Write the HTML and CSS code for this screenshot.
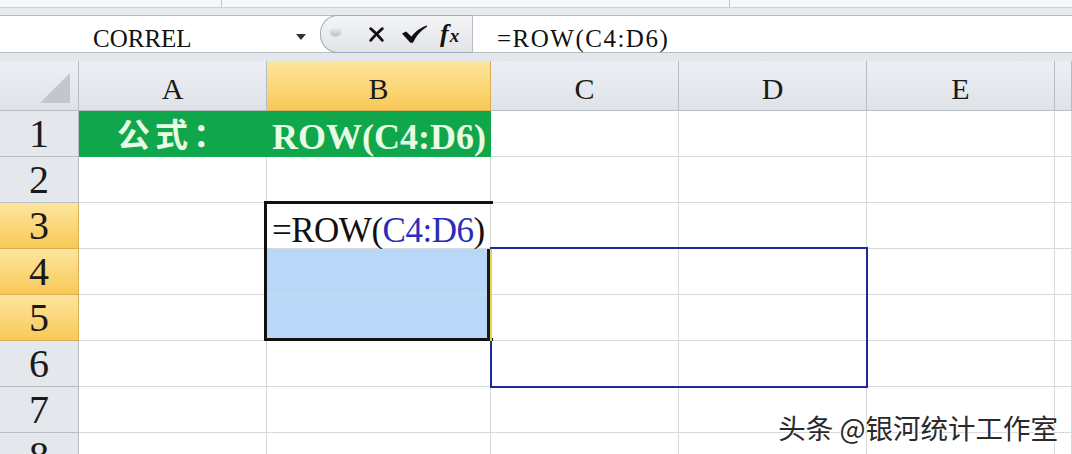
FILE: index.html
```html
<!DOCTYPE html>
<html lang="zh-CN">
<head>
    <meta charset="UTF-8">
    <meta name="viewport" content="width=device-width, initial-scale=1.0">
    <title>ROW(C4:D6)</title>
    <link rel="stylesheet" href="styles.css">
</head>
<body>
    <!-- ribbon edge -->
    <div class="top-edge">
        <span class="seg seg-1"></span>
        <span class="seg seg-2"></span>
    </div>

    <!-- name box + formula bar -->
    <div class="formula-row">
        <div class="name-box">
            <span>CORREL</span>
            <svg class="caret" width="10" height="6" viewBox="0 0 10 6"><path d="M0 0h10L5 6z" fill="#333"/></svg>
        </div>
        <div class="fx-pill">
            <svg class="dot" width="13" height="10" viewBox="0 0 13 10">
                <defs>
                    <linearGradient id="dotg" x1="0" y1="0" x2="0" y2="1">
                        <stop offset="0" stop-color="#eef0f3"/>
                        <stop offset="1" stop-color="#b9bec6"/>
                    </linearGradient>
                </defs>
                <ellipse cx="6.5" cy="5" rx="6" ry="4.5" fill="url(#dotg)"/>
            </svg>
            <svg class="cancel" width="17" height="17" viewBox="0 0 16 16"><path d="M2.5 2.5Q8 7 13.5 13.5M13.5 2.5Q7 8 2.5 13.5" stroke="#111" stroke-width="2.6" stroke-linecap="round" fill="none"/></svg>
            <svg class="enter" width="25" height="19" viewBox="0 0 24 18"><path d="M0 8L4 6L9 11Q15 3 24 0L24 1.5Q15 7 10.5 17L8 17Z" fill="#111"/></svg>
            <span class="fx"><i>f</i><i class="fx-x">x</i></span>
        </div>
        <div class="formula-input">=ROW(C4:D6)</div>
    </div>
    <div class="band"></div>

    <!-- sheet -->
    <div class="sheet">
        <div class="cell corner"><span class="corner-tri"></span></div>
        <div class="cell col-head">A</div>
        <div class="cell col-head on">B</div>
        <div class="cell col-head">C</div>
        <div class="cell col-head">D</div>
        <div class="cell col-head">E</div>
        <div class="cell col-head"></div>

        <div class="cell row-head">1</div>
        <div class="cell green label">公式：</div>
        <div class="cell green value">ROW(C4:D6)</div>
        <div class="cell"></div><div class="cell"></div><div class="cell"></div><div class="cell"></div>

        <div class="cell row-head">2</div>
        <div class="cell"></div><div class="cell"></div><div class="cell"></div><div class="cell"></div><div class="cell"></div><div class="cell"></div>

        <div class="cell row-head on">3</div>
        <div class="cell"></div>
        <div class="cell edit">=ROW(<span class="ref">C4:D6</span>)</div>
        <div class="cell"></div><div class="cell"></div><div class="cell"></div><div class="cell"></div>

        <div class="cell row-head on">4</div>
        <div class="cell"></div>
        <div class="cell sel"></div>
        <div class="cell"></div><div class="cell"></div><div class="cell"></div><div class="cell"></div>

        <div class="cell row-head on">5</div>
        <div class="cell"></div>
        <div class="cell sel"></div>
        <div class="cell"></div><div class="cell"></div><div class="cell"></div><div class="cell"></div>

        <div class="cell row-head">6</div>
        <div class="cell"></div><div class="cell"></div><div class="cell"></div><div class="cell"></div><div class="cell"></div><div class="cell"></div>

        <div class="cell row-head">7</div>
        <div class="cell"></div><div class="cell"></div><div class="cell"></div><div class="cell"></div><div class="cell"></div><div class="cell"></div>

        <div class="cell row-head">8</div>
        <div class="cell"></div><div class="cell"></div><div class="cell"></div><div class="cell"></div><div class="cell"></div><div class="cell"></div>

        <!-- range highlights drawn over the grid -->
        <div class="ref-range"></div>
        <div class="active-range"></div>
        <div class="fill-edge"></div>
    </div>

    <div class="watermark">头条 @银河统计工作室</div>
</body>
</html>
```

FILE: styles.css
```css
html, body {
    margin: 0;
    padding: 0;
}
body {
    width: 1072px;
    height: 454px;
    overflow: hidden;
    position: relative;
    background: #fff;
    font-family: "Liberation Serif", serif;
    color: #111;
}

/* ribbon edge */
.top-edge {
    display: flex;
    height: 15px;
    box-sizing: border-box;
    background: linear-gradient(#f7f8fa 0, #f7f8fa 7px, #cdd1d7 7px, #cdd1d7 8px, #e6e9ed 8px);
}
.seg {
    height: 7px;
    border-right: 1px solid #c3c7cd;
}
.seg-1 { width: 221px; }
.seg-2 { width: 507px; }

/* formula bar */
.formula-row {
    display: flex;
    height: 38px;
    box-sizing: border-box;
    border-top: 1px solid #b7bcc3;
    border-bottom: 1px solid #b7bcc3;
    background: #fff;
}
.name-box {
    width: 320px;
    box-sizing: border-box;
    padding: 0 14px 1px 93px;
    display: flex;
    justify-content: space-between;
    align-items: flex-end;
    font-size: 25px;
    line-height: 1;
}
.name-box .caret {
    margin-bottom: 11px;
}
.fx-pill {
    width: 153px;
    box-sizing: border-box;
    display: flex;
    align-items: center;
    border: 1px solid #a5abb3;
    border-right-color: #b9bec5;
    border-radius: 18px 0 0 18px;
    background: linear-gradient(#f4f5f7, #e1e4e8);
    margin: -1px 0;
}
.fx-pill .dot { margin-left: 8px; margin-top: -4px; }
.fx-pill .cancel { margin-left: 26px; }
.fx-pill .enter { margin-left: 17px; }
.fx {
    margin-left: 13px;
    font-weight: bold;
    font-size: 26px;
    line-height: 1;
    color: #111;
}
.fx-x {
    font-size: 19px;
    margin-left: 1px;
}
.formula-input {
    flex: 1;
    padding: 0 0 1px 24px;
    display: flex;
    align-items: flex-end;
    font-size: 25px;
    letter-spacing: 1.5px;
    line-height: 1;
}
.band {
    height: 8px;
    background: #e4e7eb;
}

/* sheet grid */
.sheet {
    position: relative;
    display: grid;
    grid-template-columns: 79px 188px 224px 188px 188px 188px 17px;
    grid-template-rows: 50px repeat(8, 46px);
}
.cell {
    box-sizing: border-box;
    border-right: 1px solid #d6d8db;
    border-bottom: 1px solid #d6d8db;
    display: flex;
    line-height: 1;
}
.corner, .col-head, .row-head {
    background: linear-gradient(#eceff3, #dfe3e8);
    border-right-color: #b8bcc3;
    border-bottom-color: #b8bcc3;
    color: #1a1a1a;
}
.corner {
    position: relative;
}
.corner-tri {
    position: absolute;
    right: 8px;
    bottom: 7px;
    width: 0;
    height: 0;
    border-left: 30px solid transparent;
    border-bottom: 30px solid #c3c6cb;
}
.col-head {
    justify-content: center;
    align-items: flex-end;
    padding-bottom: 6px;
    font-size: 30px;
}
.row-head {
    background: #e4e7eb;
    justify-content: center;
    align-items: flex-end;
    padding-bottom: 2px;
    font-size: 40px;
}
.col-head.on, .row-head.on {
    background: linear-gradient(#fde59e, #f8c957);
    border-right-color: #d9ad52;
    border-bottom-color: #d9ad52;
}

.green {
    background: #10a64c;
    border-color: #10a64c;
    color: #e8fbe3;
}
.label {
    align-items: center;
    padding-left: 38px;
    font-family: "Noto Sans CJK SC", sans-serif;
    font-weight: bold;
    font-size: 33px;
    letter-spacing: 5px;
}
.value {
    justify-content: flex-end;
    align-items: flex-end;
    padding: 0 4px 1px 0;
    font-weight: bold;
    font-size: 36px;
}
.edit {
    background: #fff;
    align-items: flex-end;
    padding: 0 0 0 5px;
    font-size: 35px;
    letter-spacing: -0.5px;
    white-space: nowrap;
}
.edit .ref {
    color: #2b2db8;
}
.sel {
    background: #b9d8f8;
    border-bottom-color: #c8def5;
}

/* overlays */
.ref-range {
    position: absolute;
    left: 490px;
    top: 186px;
    width: 378px;
    height: 141px;
    box-sizing: border-box;
    border: 2px solid #1c2a9c;
}
.active-range {
    position: absolute;
    left: 264px;
    top: 140px;
    width: 229px;
    height: 140px;
    box-sizing: border-box;
    border: 3px solid #111;
    border-right: none;
}
.fill-edge {
    position: absolute;
    left: 487px;
    top: 188px;
    width: 3px;
    height: 92px;
    background: #1a1a1a;
    border-right: 2px solid #e8d252;
}

.watermark {
    position: absolute;
    right: 14px;
    bottom: 13px;
    font-family: "Noto Sans CJK SC", sans-serif;
    font-size: 27.5px;
    line-height: 1;
    color: #2a2a2a;
    text-shadow: 1px 1px 0 #fff, -1px -1px 0 #fff;
}
```
